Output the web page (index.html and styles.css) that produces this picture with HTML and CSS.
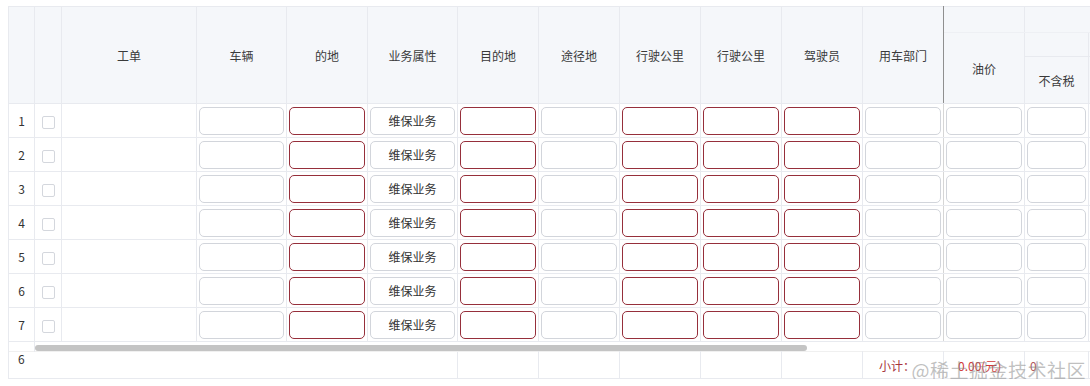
FILE: index.html
```html
<!DOCTYPE html>
<html>

<head>
    <title>用车登记</title>
    <meta name="viewport" content="width=device-width, initial-scale=1.0">
    <link rel="stylesheet" href="styles.css">
</head>

<body>

    <div class="sheet">
        <table class="grid">
            <colgroup>
                <col class="c-no">
                <col class="c-check">
                <col class="c-order">
                <col class="c-wide">
                <col class="c-std">
                <col class="c-wide">
                <col class="c-std">
                <col class="c-std">
                <col class="c-std">
                <col class="c-std">
                <col class="c-std">
                <col class="c-std">
                <col class="c-std">
                <col class="c-tax">
                <col class="c-std">
            </colgroup>
            <thead>
                <tr class="h-top">
                    <th rowspan="3"></th>
                    <th rowspan="3"></th>
                    <th rowspan="3">工单</th>
                    <th rowspan="3">车辆</th>
                    <th rowspan="3">的地</th>
                    <th rowspan="3">业务属性</th>
                    <th rowspan="3">目的地</th>
                    <th rowspan="3">途径地</th>
                    <th rowspan="3">行驶公里</th>
                    <th rowspan="3">行驶公里</th>
                    <th rowspan="3">驾驶员</th>
                    <th rowspan="3" class="edge">用车部门</th>
                    <th class="group"></th>
                    <th class="group open" colspan="2"></th>
                </tr>
                <tr class="h-mid">
                    <th rowspan="2">油价</th>
                    <th class="group"></th>
                    <th class="group"></th>
                </tr>
                <tr class="h-low">
                    <th>不含税</th>
                    <th></th>
                </tr>
            </thead>
            <tbody id="rows"></tbody>
            <tfoot>
                <tr class="scroll-row">
                    <td></td>
                    <td colspan="14" class="track">
                        <div class="thumb"></div>
                    </td>
                </tr>
                <tr class="sum-row">
                    <td class="num">6</td>
                    <td colspan="5" class="blank"></td>
                    <td></td>
                    <td></td>
                    <td></td>
                    <td></td>
                    <td></td>
                    <td class="label">小计：</td>
                    <td class="money">0.00(元)</td>
                    <td class="zero">0</td>
                    <td></td>
                </tr>
            </tfoot>
        </table>
        <div class="watermark">@稀土掘金技术社区</div>
    </div>

    <script>
        // kind of input per column after the first three: r = red, g = grey, b = business
        let kinds = ['g', 'r', 'b', 'r', 'g', 'r', 'r', 'r', 'g', 'g', 'g', 'g'];
        let body = document.getElementById('rows');

        for (let n = 1; n <= 7; n++) {
            let html = `<td class="num">${n}</td><td><span class="box"></span></td><td></td>`;
            kinds.forEach(k => {
                if (k == 'b') {
                    html += `<td><input class="in" value="维保业务"></td>`;
                } else if (k == 'r') {
                    html += `<td><input class="in red"></td>`;
                } else {
                    html += `<td><input class="in"></td>`;
                }
            });
            let row = document.createElement('tr');
            row.innerHTML = html;
            body.append(row);
        }
    </script>

</body>

</html>
```

FILE: styles.css
```css
body {
    margin: 0;
    padding: 6px 0 0 8px;
    font-family: "Noto Sans CJK SC", "Noto Sans", sans-serif;
    font-size: 12px;
    color: #333;
    background: white;
    overflow: hidden;
}

.sheet {
    position: relative;
    width: 1082px;
    overflow: hidden;
}

.grid {
    border-collapse: collapse;
    table-layout: fixed;
    width: 1160px;
}

.c-no { width: 26px; }
.c-check { width: 27px; }
.c-order { width: 135px; }
.c-wide { width: 90px; }
.c-std { width: 81px; }
.c-tax { width: 64px; }

.grid th,
.grid td {
    border: 1px solid #e8eaef;
    padding: 0;
    text-align: center;
    vertical-align: middle;
}

.grid th {
    background: #f5f7fa;
    font-weight: normal;
    color: #3a3a3a;
}

.grid th.edge {
    border-right: 1px solid #8f8f8f;
}

.h-top th.group {
    height: 25px;
    border-bottom-color: #eef0f4;
}

.h-top th.open {
    border-left-color: #f5f7fa;
}

.h-mid th {
    height: 23px;
}

.h-low th {
    height: 46px;
}

.grid tbody td {
    height: 33px;
    padding: 0 2px;
}

.grid tbody td:nth-child(12) {
    border-right-color: #d6d6d6;
}

.num {
    color: #333;
}

.box {
    display: inline-block;
    width: 11px;
    height: 11px;
    border: 1px solid #d4d7dd;
    border-radius: 2px;
    vertical-align: middle;
}

.in {
    display: block;
    box-sizing: border-box;
    width: 100%;
    height: 28px;
    border: 1px solid #d2d5db;
    border-radius: 5px;
    background: white;
    font: inherit;
    color: #333;
    text-align: center;
    padding: 0 4px;
    outline: none;
}

.in.red {
    border-color: #962f3b;
}

.grid .scroll-row td {
    height: 9px;
    border-top: none;
    border-bottom: none;
    vertical-align: bottom;
}

.grid .scroll-row td.track {
    border-right: none;
    text-align: left;
}

.thumb {
    width: 772px;
    height: 6px;
    background: #c4c4c4;
    border-radius: 3px;
}

.grid .sum-row td {
    height: 26px;
    border-top-color: #f0f0f0;
}

.grid .sum-row td.num {
    vertical-align: top;
    text-align: left;
    line-height: 14px;
    padding: 0 0 0 9px;
    border-right: none;
    border-bottom-color: #e8eaef;
}

.grid .sum-row td.blank {
    border-left: none;
    border-right: none;
}

.grid .sum-row td.label {
    text-align: right;
    padding-right: 28px;
    color: #a8343c;
}

.grid .sum-row td.money {
    text-align: left;
    padding-left: 14px;
    color: #d23a3a;
    border-left: none;
}

.grid .sum-row td.zero {
    text-align: left;
    padding-left: 5px;
    color: #b0585c;
}

.watermark {
    position: absolute;
    right: 4px;
    bottom: -4px;
    font-size: 19px;
    color: rgba(130, 130, 130, 0.5);
    letter-spacing: 0.5px;
}
```
